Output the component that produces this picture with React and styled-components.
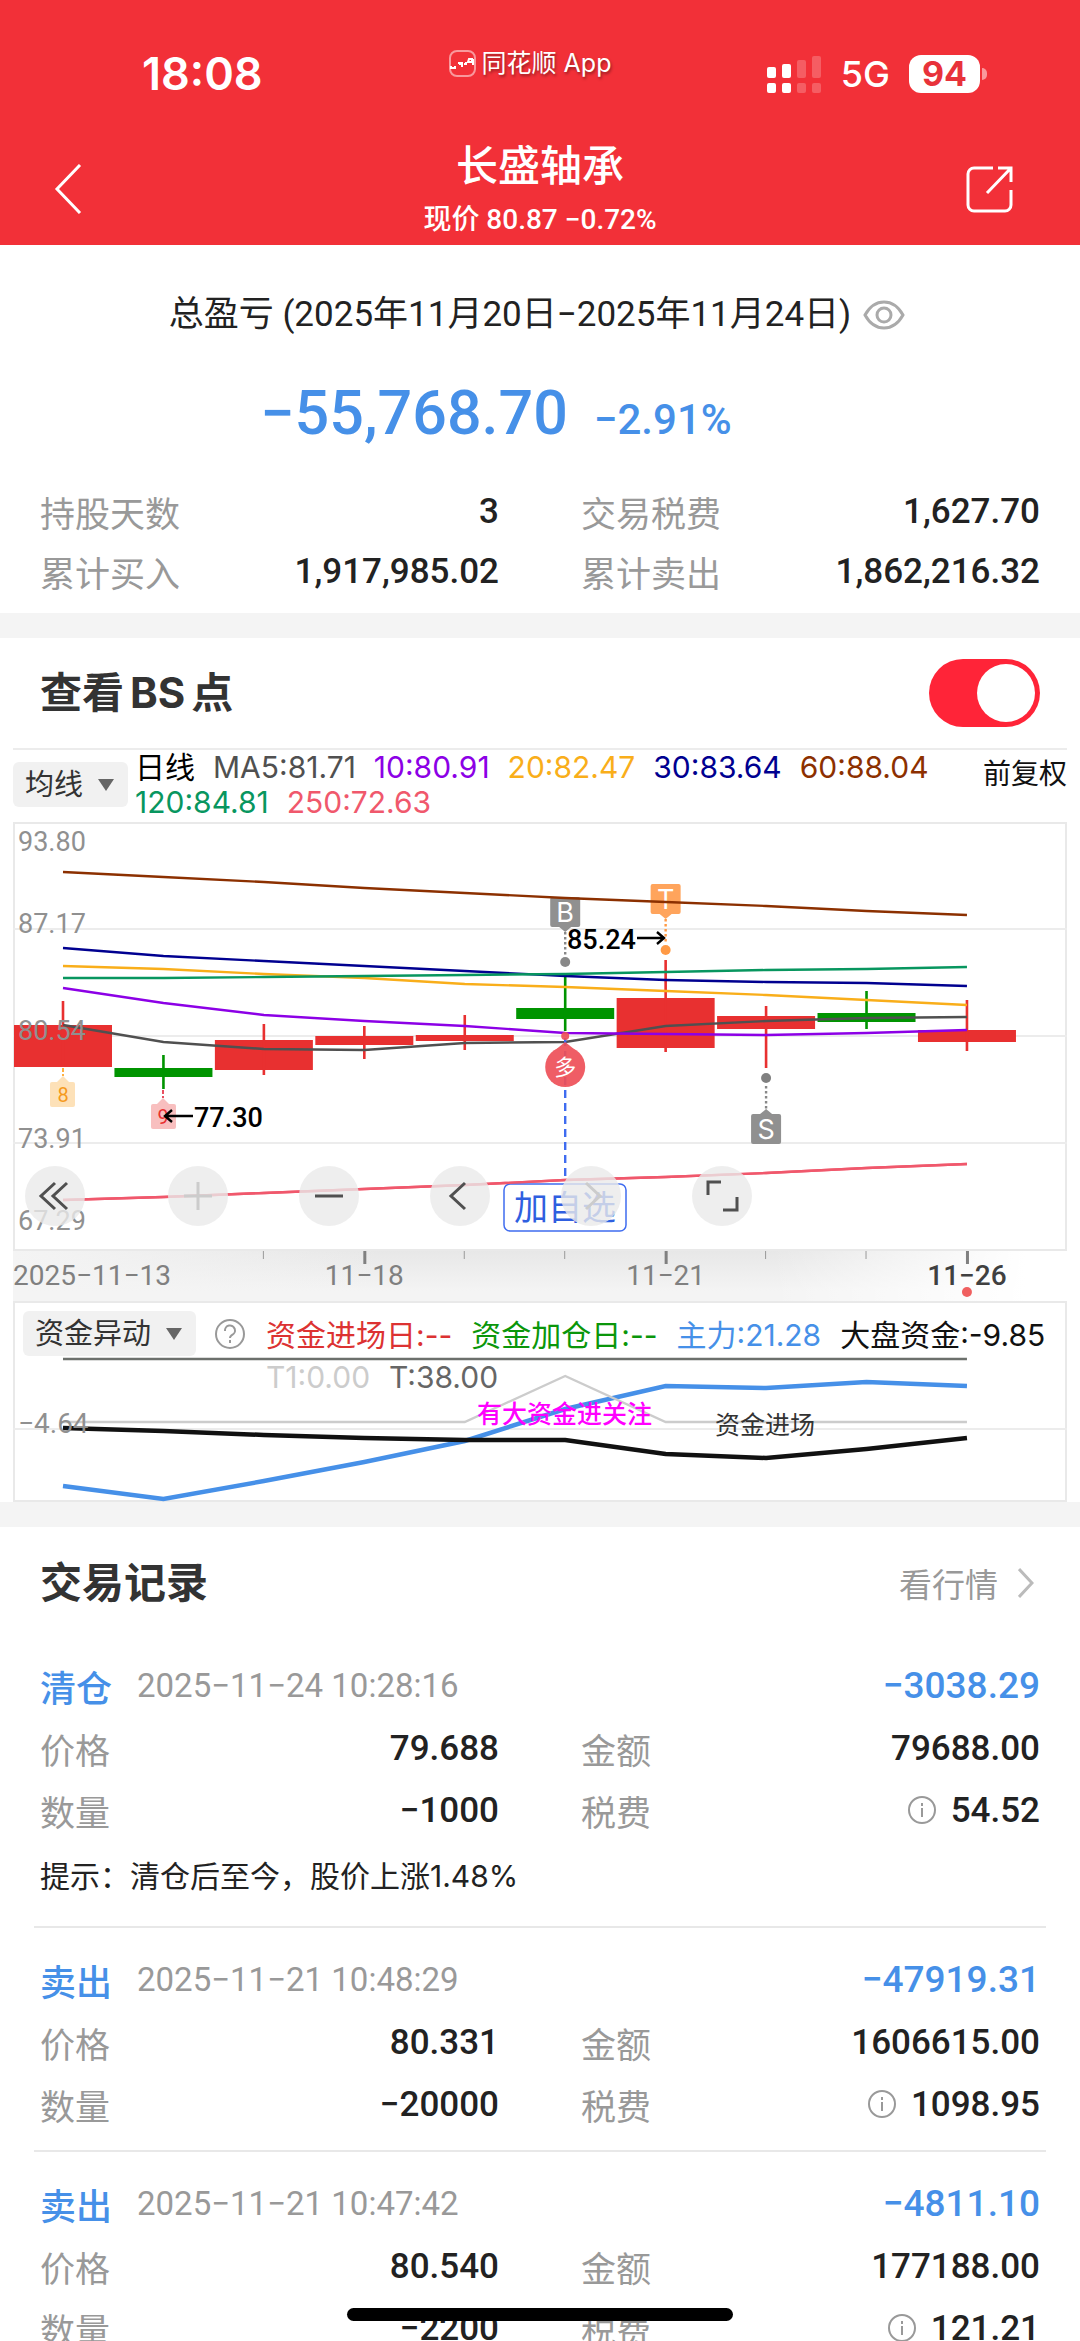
import React, { useState } from "react";
import styled, { createGlobalStyle } from "styled-components";

const NUM_FONT = 'Roboto, "Noto Sans CJK SC", sans-serif';
const TEXT_FONT = 'Inter, "Noto Sans CJK SC", sans-serif';

const BLUE = "#4690e8";
const RED = "#e83030";
const GREEN = "#009400";

const summary = [
    { label: "持股天数", value: "3" },
    { label: "交易税费", value: "1,627.70" },
    { label: "累计买入", value: "1,917,985.02" },
    { label: "累计卖出", value: "1,862,216.32" },
];

const averages = [
    { text: "MA5:81.71", color: "#505050", y: [203, 220, 227, 228, 221, 220, 204, 199, 196, 195] },
    { text: "10:80.91", color: "#8c00e6", y: [166, 181, 193, 199, 204, 211, 212, 213, 211, 208] },
    { text: "20:82.47", color: "#f9ae1a", y: [144, 147, 152, 156, 162, 165, 169, 173, 178, 183] },
    { text: "30:83.64", color: "#000090", y: [126, 134, 139, 144, 149, 154, 158, 160, 161, 164] },
    { text: "60:88.04", color: "#8c3000", y: [50, 55, 60, 66, 71, 76, 80, 84, 89, 93] },
    { text: "120:84.81", color: "#08965f", y: [156, 156, 155, 154, 153, 152, 150, 148, 147, 145] },
    { text: "250:72.63", color: "#f0586c", y: [378, 375, 371, 367, 363, 358, 355, 351, 346, 342] },
];

// high, body top, body bottom, low
const candles = [
    { color: RED, bar: [179, 203, 245, 245] },
    { color: GREEN, bar: [233, 246, 255, 267] },
    { color: RED, bar: [202, 218, 248, 253] },
    { color: RED, bar: [204, 214, 223, 237] },
    { color: RED, bar: [193, 213, 219, 228] },
    { color: GREEN, bar: [151, 186, 197, 209] },
    { color: RED, bar: [138, 176, 226, 230] },
    { color: RED, bar: [184, 194, 207, 246] },
    { color: GREEN, bar: [169, 191, 200, 207] },
    { color: RED, bar: [178, 208, 220, 229] },
];

const prices = [
    { text: "93.80", y: 29 },
    { text: "87.17", y: 111 },
    { text: "80.54", y: 218 },
    { text: "73.91", y: 326 },
    { text: "67.29", y: 408 },
];

const fund = {
    main: [185, 198, 180, 161, 140, 108, 85, 87, 81, 85],
    market: [127, 130, 134, 137, 139, 139, 153, 157, 148, 137],
    signal: [121, 121, 121, 121, 121, 75, 121, 121, 121, 121],
};

const records = [
    {
        type: "清仓",
        time: "2025−11−24 10:28:16",
        profit: "−3038.29",
        price: "79.688",
        amount: "79688.00",
        count: "−1000",
        tax: "54.52",
        tip: "提示：清仓后至今，股价上涨1.48%",
    },
    {
        type: "卖出",
        time: "2025−11−21 10:48:29",
        profit: "−47919.31",
        price: "80.331",
        amount: "1606615.00",
        count: "−20000",
        tax: "1098.95",
    },
    {
        type: "卖出",
        time: "2025−11−21 10:47:42",
        profit: "−4811.10",
        price: "80.540",
        amount: "177188.00",
        count: "−2200",
        tax: "121.21",
    },
];

const dayX = (i) => 50 + i * 100.44;
const toPoints = (list) => list.map((y, i) => `${dayX(i)},${y}`).join(" ");

const StatusBar = () => (
    <Status>
        <Clock>18:08</Clock>
        <Watermark>
            <svg width="27" height="27" viewBox="0 0 27 27" fill="none">
                <rect x="1" y="1" width="25" height="25" rx="7" stroke="#ffffff80" strokeWidth="2" />
                <path d="M2 16v2h4v-2M9 13h2v2M13 12v5M15 14h2v-2M19 12h4v-3h-3zM24 9v6" stroke="#fff" strokeWidth="2" />
            </svg>
            <span>同花顺 App</span>
        </Watermark>
        <Signals>
            <svg width="55" height="38" viewBox="0 0 55 38" fill="#fff">
                <rect x="0" y="12" width="9" height="11" rx="2" />
                <rect x="15" y="9" width="9" height="14" rx="2" />
                <rect x="30" y="5" width="9" height="18" rx="2" opacity=".22" />
                <rect x="45" y="1" width="9" height="22" rx="2" opacity=".22" />
                <rect x="0" y="28" width="9" height="10" rx="2" />
                <rect x="15" y="28" width="9" height="10" rx="2" />
                <rect x="30" y="28" width="9" height="10" rx="2" opacity=".22" />
                <rect x="45" y="28" width="9" height="10" rx="2" opacity=".22" />
            </svg>
            <span>5G</span>
            <Battery>94</Battery>
        </Signals>
    </Status>
);

const Flag = ({ x, y, color, text, down }) => (
    <g>
        <rect x={x - 15} y={y} width="30" height="30" rx="2" fill={color} />
        <path d={down ? `M${x - 6} ${y + 30}l6 5l6 -5z` : `M${x - 6} ${y}l6 -5l6 5z`} fill={color} />
        <text x={x} y={y + 25} fontSize="27" textAnchor="middle" fill="#fff" fontFamily={TEXT_FONT}>{text}</text>
    </g>
);

const PriceChart = () => (
    <ChartSvg viewBox="0 0 1054 479">
        <defs>
            <linearGradient id="axisShade" x1="0" x2="0" y1="0" y2="1">
                <stop offset="0" stopColor="#e7e7e7" />
                <stop offset=".8" stopColor="#f4f4f4" />
            </linearGradient>
            <linearGradient id="axisFade" x1="0" x2="1" y1="0" y2="0">
                <stop offset="0" stopColor="#f4f4f4" />
                <stop offset=".35" stopColor="#f4f4f4" stopOpacity="0" />
                <stop offset=".72" stopColor="#fff" stopOpacity="0" />
                <stop offset=".96" stopColor="#fff" />
            </linearGradient>
        </defs>
        <rect x="0" y="428" width="1054" height="51" fill="url(#axisShade)" />
        <rect x="0" y="428" width="1054" height="51" fill="url(#axisFade)" />
        <rect x="1" y="1" width="1052" height="427" fill="#fff" stroke="#e9e9e9" strokeWidth="2" />
        {[107, 214, 321].map((y) => (
            <line key={y} x1="0" x2="1054" y1={y} y2={y} stroke="#ececec" strokeWidth="2" />
        ))}
        {candles.map(({ color, bar }, i) => (
            <g key={i} fill={color}>
                <rect x={dayX(i) - 49} y={bar[1]} width="98" height={bar[2] - bar[1]} />
                <rect x={dayX(i) - 1.3} y={bar[0]} width="2.6" height={bar[3] - bar[0]} />
            </g>
        ))}

        <Flag x={dayX(5)} y={75} color="#909090" text="B" down />
        <Flag x={dayX(6)} y={62} color="#ffa45c" text="T" down />
        <Flag x={dayX(7)} y={292} color="#909090" text="S" />
        <g fill="none" strokeWidth="2.4" strokeDasharray="2.5 2.5">
            <path d={`M${dayX(5)} 110V134`} stroke="#888" />
            <path d={`M${dayX(6)} 97V122`} stroke="#ff9a45" />
            <path d={`M${dayX(7)} 264V287`} stroke="#888" />
        </g>
        <circle cx={dayX(5)} cy="140" r="5" fill="#888" />
        <circle cx={dayX(6)} cy="128" r="5" fill="#ff9a45" />
        <circle cx={dayX(7)} cy="256" r="5" fill="#808080" />

        {averages.map(({ color, y }) => (
            <polyline key={color} points={toPoints(y)} fill="none" stroke={color} strokeWidth="2.4" />
        ))}

        <line x1={dayX(5)} x2={dayX(5)} y1="216" y2="354" stroke="#3f6cf0" strokeWidth="2.4" strokeDasharray="8 5" />
        <g opacity=".92">
            <circle cx={dayX(5)} cy="214" r="4" fill="#ee5058" />
            <circle cx={dayX(5)} cy="245" r="20" fill="#ee5058" />
            <path d={`M${dayX(5) - 10} 228l10 -8l10 8z`} fill="#ee5058" />
        </g>
        <text x={dayX(5)} y="253" fontSize="22" textAnchor="middle" fill="#fff">多</text>
        <rect x="491" y="362" width="122" height="47" rx="6" fill="#fff" stroke="#3f6cf0" strokeWidth="1.5" />
        <text x="552" y="398" fontSize="34" textAnchor="middle" fill="#2f5fe0">加自选</text>
        <polyline points={toPoints(averages[6].y)} fill="none" stroke="#f0586c" strokeWidth="2.4" />

        <path d="M50 246V254" stroke="#ffb040" strokeWidth="2" strokeDasharray="4 2" />
        <path d="M44 260l6 -6l6 6z" fill="#fde1b8" />
        <rect x="37" y="260" width="25" height="25" rx="2" fill="#fde1b8" />
        <text x="50" y="280" fontSize="20" textAnchor="middle" fill="#f59a1c">8</text>
        <path d="M150 268V276" stroke="#e85060" strokeWidth="2" strokeDasharray="4 2" />
        <path d="M144 282l6 -6l6 6z" fill="#f8bfbf" />
        <rect x="138" y="282" width="25" height="25" rx="2" fill="#f8bfbf" />
        <text x="150" y="302" fontSize="20" textAnchor="middle" fill="#e83030">9</text>

        <g fill="none" stroke="#000" strokeWidth="2.4">
            <path d="M180 294H152M159 288l-7 6l7 6" />
            <path d="M624 116H651M644 110l7 6l-7 6" />
        </g>
        <g fontSize="27" fontWeight="500" fill="#000">
            <text x="181" y="305">77.30</text>
            <text x="554" y="127">85.24</text>
        </g>

        <g fontSize="27" fill="#909090">
            {prices.map(({ text, y }) => <text key={text} x="5" y={y}>{text}</text>)}
        </g>

        {[2, 4, 5, 7, 8].map((i) => (
            <rect key={i} x={dayX(i) - 1} y="429" width="1" height="8" fill="#999" />
        ))}
        {[3, 6, 9].map((i) => (
            <rect key={i} x={dayX(i) - 1} y="429" width="3" height="13" fill="#808080" />
        ))}
        <g fontSize="28" fill="#808080">
            <text x="0" y="463">2025−11−13</text>
            <text x={dayX(3)} y="463" textAnchor="middle">11−18</text>
            <text x={dayX(6)} y="463" textAnchor="middle">11−21</text>
            <text x={dayX(9)} y="463" textAnchor="middle" fill="#404040" fontWeight="500">11−26</text>
        </g>
        <circle cx={dayX(9)} cy="470" r="5" fill="#f06060" />
    </ChartSvg>
);

const ChartTools = () => (
    <Tools>
        <ToolButton aria-label="最早">
            <svg viewBox="0 0 60 60"><path d="M30 17L16 30l14 13M42 17L28 30l14 13" /></svg>
        </ToolButton>
        <ToolButton aria-label="放大" disabled>
            <svg viewBox="0 0 60 60"><path d="M30 16v28M16 30h28" /></svg>
        </ToolButton>
        <ToolButton aria-label="缩小">
            <svg viewBox="0 0 60 60"><path d="M16 30h28" /></svg>
        </ToolButton>
        <ToolButton aria-label="向左">
            <svg viewBox="0 0 60 60"><path d="M35 17L21 30l14 13" /></svg>
        </ToolButton>
        <ToolButton aria-label="向右" disabled>
            <svg viewBox="0 0 60 60"><path d="M25 17l14 13l-14 13" /></svg>
        </ToolButton>
        <ToolButton aria-label="全屏">
            <svg viewBox="0 0 60 60"><path d="M16 29V16h13M45 31v13H31" /></svg>
        </ToolButton>
    </Tools>
);

const FundChart = () => (
    <FundSvg viewBox="0 0 1054 201">
        <rect x="1" y="1" width="1052" height="199" fill="#fff" stroke="#e9e9e9" strokeWidth="2" />
        <line x1="0" x2="1054" y1="128" y2="128" stroke="#ececec" strokeWidth="2" />
        <g fill="none">
            <line x1={dayX(0)} x2={dayX(9)} y1="58" y2="58" stroke="#6c706c" strokeWidth="2.5" />
            <polyline points={toPoints(fund.main)} stroke={BLUE} strokeWidth="4.5" />
            <polyline points={toPoints(fund.signal)} stroke="#ccc" strokeWidth="2.4" />
            <polyline points={toPoints(fund.market)} stroke="#111" strokeWidth="4.5" />
        </g>
        <text x="5" y="132" fontSize="28" fill="#909090">−4.64</text>
        <text x="464" y="122" fontSize="25" fontWeight="500" fill="#f0f">有大资金进关注</text>
        <text x="702" y="133" fontSize="25" fill="#333">资金进场</text>
    </FundSvg>
);

const Select = ({ label, value }) => (
    <SelectBox>
        <select aria-label={label} defaultValue={value}>
            <option>{value}</option>
        </select>
        <svg width="16" height="12" viewBox="0 0 16 12"><path d="M0 0h16l-8 12z" fill="#666" /></svg>
    </SelectBox>
);

const Record = ({ record }) => (
    <RecordItem>
        <RecordHead>
            <h3>{record.type}</h3>
            <time>{record.time}</time>
            <strong>{record.profit}</strong>
        </RecordHead>
        <Facts $row="62px">
            <Fact><dt>价格</dt><dd>{record.price}</dd></Fact>
            <Fact><dt>金额</dt><dd>{record.amount}</dd></Fact>
            <Fact><dt>数量</dt><dd>{record.count}</dd></Fact>
            <Fact>
                <dt>税费</dt>
                <dd>
                    <svg width="30" height="30" viewBox="0 0 30 30" fill="none" stroke="#999" strokeWidth="2">
                        <circle cx="15" cy="15" r="13" />
                        <path d="M15 13v9M15 8v3" />
                    </svg>
                    {record.tax}
                </dd>
            </Fact>
        </Facts>
        {record.tip && <Tip>{record.tip}</Tip>}
    </RecordItem>
);

const App = () => {
    const [showPoints, setShowPoints] = useState(true);

    return (
        <Screen>
            <GlobalStyle />
            <Header>
                <StatusBar />
                <NavBar>
                    <IconButton aria-label="返回">
                        <svg width="28" height="50" viewBox="0 0 28 50"><path d="M26 1L3 25l23 24" /></svg>
                    </IconButton>
                    <NavTitle>
                        <h1>长盛轴承</h1>
                        <p>现价 80.87 −0.72%</p>
                    </NavTitle>
                    <IconButton aria-label="分享">
                        <svg width="48" height="48" viewBox="0 0 48 48">
                            <path d="M27 3H8a6 6 0 0 0-6 6v31a6 6 0 0 0 6 6h31a6 6 0 0 0 6-6V25M32 3h13v14M45 3L21 28" />
                        </svg>
                    </IconButton>
                </NavBar>
            </Header>

            <Content>
                <Summary>
                    <SummaryTitle>
                        <h2>总盈亏 (2025年11月20日−2025年11月24日)</h2>
                        <button aria-label="隐藏金额">
                            <svg width="42" height="30" viewBox="0 0 42 30" fill="none" stroke="#aaa" strokeWidth="3">
                                <path d="M2 15C7 6 13 2 21 2s14 4 19 13c-5 9-11 13-19 13S7 24 2 15z" />
                                <circle cx="21" cy="15" r="7" />
                            </svg>
                        </button>
                    </SummaryTitle>
                    <Profit>
                        <strong>−55,768.70</strong>
                        <span>−2.91%</span>
                    </Profit>
                    <Facts $row="60px">
                        {summary.map(({ label, value }) => (
                            <Fact key={label}><dt>{label}</dt><dd>{value}</dd></Fact>
                        ))}
                    </Facts>
                </Summary>

                <ChartSection>
                    <SwitchRow>
                        <SectionTitle>查看<span>BS</span>点</SectionTitle>
                        <Switch
                            type="checkbox"
                            aria-label="查看BS点"
                            checked={showPoints}
                            onChange={(e) => setShowPoints(e.target.checked)}
                        />
                    </SwitchRow>
                    <ChartBox>
                        <Legend>
                            <Select label="指标" value="均线" />
                            <LegendItems>
                                <LegendItem $color="#000">日线</LegendItem>
                                {averages.map(({ text, color }) => (
                                    <LegendItem key={text} $color={color}>{text}</LegendItem>
                                ))}
                            </LegendItems>
                            <Adjust>前复权</Adjust>
                        </Legend>
                        <ChartArea>
                            <PriceChart />
                            <ChartTools />
                        </ChartArea>
                        <FundArea>
                            <FundChart />
                            <FundHead>
                                <Select label="副图指标" value="资金异动" />
                                <HelpButton aria-label="说明">
                                    <svg width="32" height="32" viewBox="0 0 32 32" fill="none" stroke="#999" strokeWidth="2">
                                        <circle cx="16" cy="16" r="14" />
                                        <path d="M11 13a5 5 0 1 1 7 4c-1 1-2 1-2 3M16 22v3" />
                                    </svg>
                                </HelpButton>
                                <FundValues>
                                    <LegendItem $color="#dc3232">资金进场日:--</LegendItem>
                                    <LegendItem $color="#0a960a">资金加仓日:--</LegendItem>
                                    <LegendItem $color={BLUE}>主力:21.28</LegendItem>
                                    <LegendItem $color="#111">大盘资金:-9.85</LegendItem>
                                    <LegendItem $color="#ccc">T1:0.00</LegendItem>
                                    <LegendItem $color="#666">T:38.00</LegendItem>
                                </FundValues>
                            </FundHead>
                        </FundArea>
                    </ChartBox>
                </ChartSection>

                <section>
                    <RecordsHead>
                        <SectionTitle>交易记录</SectionTitle>
                        <a href="#quote">
                            看行情
                            <svg width="16" height="30" viewBox="0 0 16 30" fill="none" stroke="#bbb" strokeWidth="3">
                                <path d="M1 1l13 14L1 29" />
                            </svg>
                        </a>
                    </RecordsHead>
                    {records.map((record) => <Record key={record.time} record={record} />)}
                </section>
            </Content>
            <HomeBar />
        </Screen>
    );
};

const GlobalStyle = createGlobalStyle`
    * {
        box-sizing: border-box;
    }
    body, h1, h2, h3, p, dl, dd {
        margin: 0;
    }
    body {
        background-color: white;
        font-family: ${NUM_FONT};
    }
    button {
        padding: 0;
        border: none;
        background: none;
        cursor: pointer;
    }
    svg {
        display: block;
    }
`;

const Screen = styled.div`
    display: flex;
    flex-direction: column;
    height: 100vh;
    overflow: hidden;
    position: relative;
`;

const Header = styled.header`
    color: white;
    background-color: #f23038;
    flex-shrink: 0;
`;

const Status = styled.div`
    display: grid;
    grid-template-columns: 1fr auto 1fr;
    align-items: center;
    padding: 44px 92px 0 72px;
    height: 104px;
    font-family: ${TEXT_FONT};
`;

const Clock = styled.span`
    padding-left: 70px;
    font-size: 45px;
    font-weight: 600;
    line-height: 60px;
`;

const Watermark = styled.div`
    display: flex;
    align-items: center;
    align-self: start;
    gap: 6px;
    font-size: 25px;
    line-height: 38px;
    text-shadow: 1px 2px 3px rgba(0, 0, 0, 0.4);
`;

const Signals = styled.div`
    display: flex;
    align-items: center;
    justify-content: flex-end;
    gap: 19px;
    font-size: 36px;
    font-weight: 500;
    line-height: 60px;
`;

const Battery = styled.span`
    width: 71px;
    height: 38px;
    margin-right: 8px;
    border-radius: 12px;
    color: #e8323a;
    background-color: white;
    font-size: 34px;
    font-weight: 700;
    line-height: 38px;
    text-align: center;
    position: relative;
    &::after {
        content: "";
        position: absolute;
        top: 13px;
        right: -7px;
        width: 5px;
        height: 12px;
        border-radius: 0 5px 5px 0;
        background-color: rgba(255, 255, 255, 0.5);
    }
`;

const NavBar = styled.nav`
    display: grid;
    grid-template-columns: 1fr auto 1fr;
    align-items: center;
    height: 141px;
    padding: 28px 66px 0 54px;
`;

const NavTitle = styled.div`
    padding-left: 12px;
    text-align: center;
    font-weight: 500;
    h1 {
        font-size: 42px;
        font-weight: 500;
        line-height: 62px;
    }
    p {
        font-size: 28px;
        line-height: 44px;
    }
`;

const IconButton = styled.button`
    justify-self: start;
    &:last-child {
        justify-self: end;
    }
    svg {
        fill: none;
        stroke: white;
        stroke-width: 3px;
    }
`;

const Content = styled.main`
    flex: 1;
    min-height: 0;
    overflow-y: auto;
    scrollbar-width: none;
`;

const Summary = styled.section`
    padding: 40px 40px 12px;
    border-bottom: 25px solid #f4f4f4;
`;

const SummaryTitle = styled.div`
    display: flex;
    align-items: center;
    justify-content: center;
    gap: 12px;
    padding-right: 6px;
    h2 {
        color: #222;
        font-size: 35px;
        font-weight: 400;
        line-height: 60px;
    }
`;

const Profit = styled.div`
    display: flex;
    align-items: baseline;
    justify-content: center;
    gap: 26px;
    height: 136px;
    padding: 28px 88px 0 0;
    color: ${BLUE};
    font-weight: 500;
    line-height: 80px;
    strong {
        font-size: 61px;
        font-weight: 500;
    }
    span {
        font-size: 42px;
    }
`;

const Facts = styled.dl`
    display: grid;
    grid-template-columns: 1fr 1fr;
    column-gap: 82px;
    grid-auto-rows: ${(props) => props.$row};
`;

const Fact = styled.div`
    display: flex;
    align-items: center;
    justify-content: space-between;
    font-size: 35px;
    dt {
        color: #999;
    }
    dd {
        display: flex;
        align-items: center;
        gap: 14px;
        color: #222;
        font-weight: 500;
    }
`;

const ChartSection = styled.section`
    border-bottom: 25px solid #f4f4f4;
`;

const SwitchRow = styled.div`
    display: flex;
    align-items: center;
    justify-content: space-between;
    height: 110px;
    padding: 0 40px;
`;

const SectionTitle = styled.h2`
    color: #333;
    font-family: ${TEXT_FONT};
    font-size: 42px;
    font-weight: 700;
    line-height: 60px;
    span {
        margin: 0 6px;
    }
`;

const Switch = styled.input`
    appearance: none;
    display: flex;
    width: 111px;
    height: 68px;
    margin: 0;
    padding: 5px;
    border-radius: 34px;
    background-color: #ddd;
    cursor: pointer;
    &::before {
        content: "";
        width: 58px;
        height: 58px;
        border-radius: 50%;
        background-color: white;
    }
    &:checked {
        justify-content: flex-end;
        background-color: #ff2438;
    }
`;

const ChartBox = styled.div`
    margin: 0 13px;
    border-top: 2px solid #ececec;
`;

const Legend = styled.div`
    display: flex;
    align-items: flex-start;
    height: 72px;
    > label {
        margin-top: 12px;
    }
`;

const SelectBox = styled.label`
    display: flex;
    align-items: center;
    flex-shrink: 0;
    gap: 14px;
    height: 45px;
    padding: 0 14px 0 12px;
    border-radius: 6px;
    background-color: #f1f1f1;
    select {
        appearance: none;
        padding: 0;
        border: none;
        color: #333;
        background: none;
        font-family: ${TEXT_FONT};
        font-size: 29px;
        line-height: 44px;
    }
`;

const LegendItems = styled.div`
    display: flex;
    flex-wrap: wrap;
    flex: 1;
    column-gap: 18px;
    padding-left: 7px;
`;

const LegendItem = styled.span`
    color: ${(props) => props.$color};
    font-family: ${TEXT_FONT};
    font-size: 30px;
    line-height: 35px;
    white-space: nowrap;
`;

const Adjust = styled.span`
    color: #111;
    font-size: 28px;
    line-height: 50px;
`;

const ChartArea = styled.div`
    position: relative;
`;

const ChartSvg = styled.svg`
    width: 100%;
    font-family: ${NUM_FONT};
`;

const FundSvg = styled(ChartSvg)``;

const Tools = styled.div`
    display: flex;
    gap: 71px;
    position: absolute;
    left: 12px;
    bottom: 75px;
`;

const ToolButton = styled.button`
    width: 60px;
    height: 60px;
    border-radius: 50%;
    background-color: rgba(234, 234, 234, 0.8);
    &:first-child {
        margin-right: 12px;
    }
    svg {
        fill: none;
        stroke: #505050;
        stroke-width: 3px;
    }
    &:disabled svg {
        stroke: #ccc;
    }
`;

const FundArea = styled.div`
    position: relative;
`;

const FundHead = styled.div`
    display: flex;
    align-items: flex-start;
    position: absolute;
    top: 10px;
    left: 10px;
    right: 0;
`;

const HelpButton = styled.button`
    margin: 7px 20px 0 18px;
`;

const FundValues = styled.div`
    display: flex;
    flex-wrap: wrap;
    flex: 1;
    column-gap: 19px;
    padding-top: 3px;
    span {
        line-height: 42px;
    }
`;

const RecordsHead = styled.div`
    display: flex;
    align-items: center;
    justify-content: space-between;
    height: 121px;
    padding: 0 46px 10px 40px;
    a {
        display: flex;
        align-items: center;
        gap: 20px;
        color: #999;
        font-size: 33px;
        text-decoration: none;
    }
`;

const RecordItem = styled.article`
    margin: 0 34px;
    padding: 6px 6px 15px;
    & + & {
        padding-top: 20px;
        border-top: 2px solid #e8e8e8;
    }
`;

const RecordHead = styled.header`
    display: flex;
    align-items: center;
    gap: 25px;
    height: 63px;
    h3 {
        color: ${BLUE};
        font-size: 36px;
        font-weight: 500;
    }
    time {
        flex: 1;
        color: #999;
        font-size: 33px;
    }
    strong {
        color: ${BLUE};
        font-size: 37px;
        font-weight: 500;
    }
`;

const Tip = styled.p`
    padding: 10px 0;
    color: #222;
    font-family: ${TEXT_FONT};
    font-size: 30px;
    line-height: 50px;
`;

const HomeBar = styled.div`
    width: 386px;
    height: 13px;
    border-radius: 7px;
    background-color: black;
    position: absolute;
    bottom: 20px;
    left: 50%;
    transform: translateX(-50%);
`;

export default App;
